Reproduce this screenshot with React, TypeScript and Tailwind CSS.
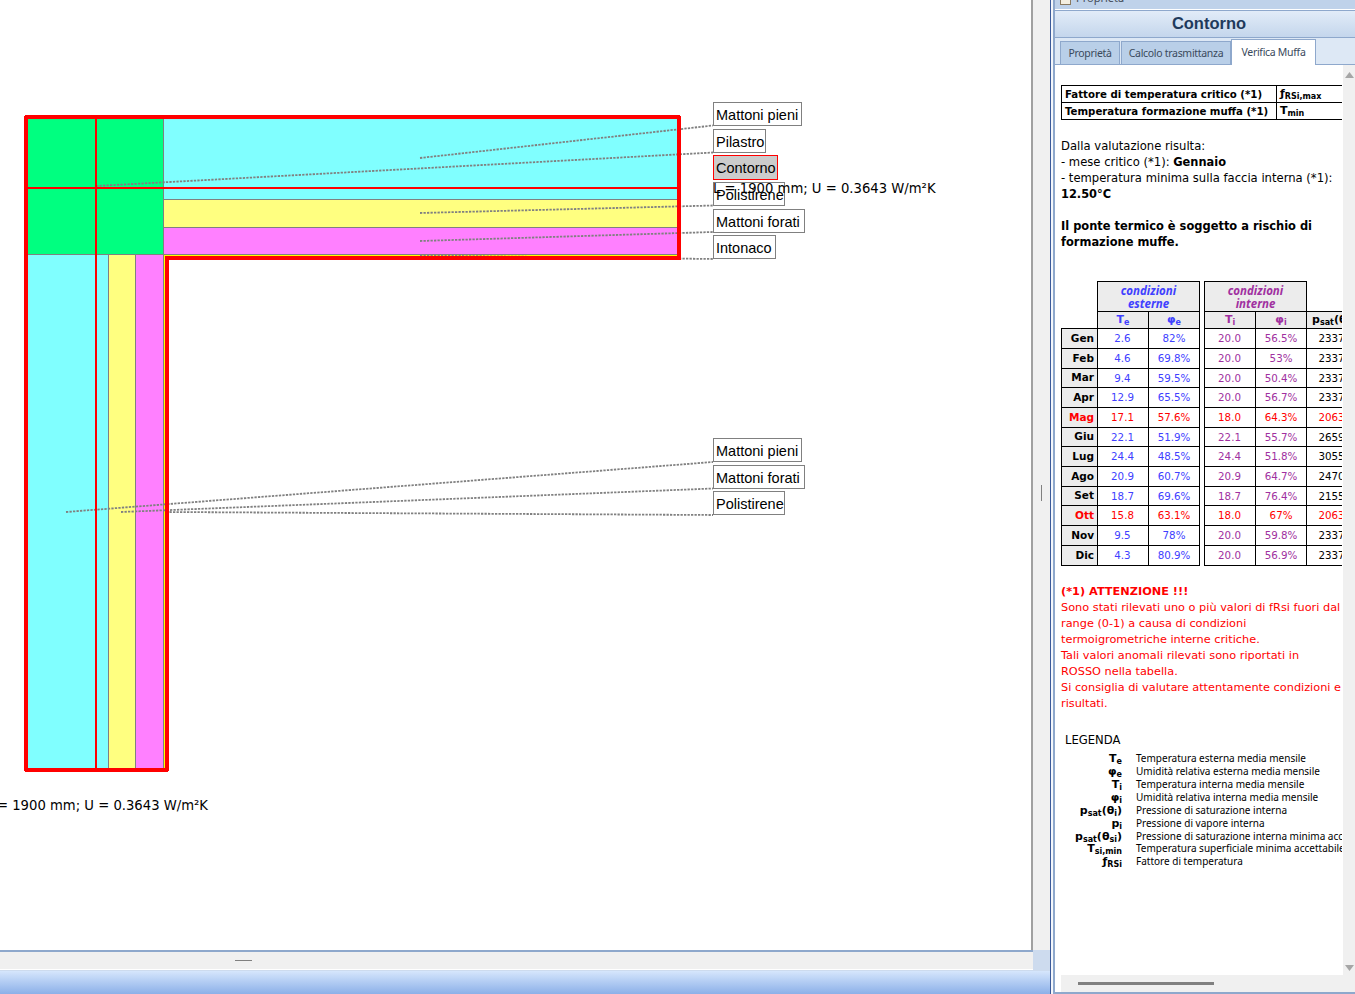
import React from "react";

const body = "font-['Noto_Sans','DejaVu_Sans',sans-serif]";
const verd = "font-['DejaVu_Sans',sans-serif]";

const months = [
  ["Gen", "2.6", "82%", "20.0", "56.5%", "2337", false, "h-[20px]"],
  ["Feb", "4.6", "69.8%", "20.0", "53%", "2337", false, "h-[20px]"],
  ["Mar", "9.4", "59.5%", "20.0", "50.4%", "2337", false, "h-[19px]"],
  ["Apr", "12.9", "65.5%", "20.0", "56.7%", "2337", false, "h-[20px]"],
  ["Mag", "17.1", "57.6%", "18.0", "64.3%", "2063", true, "h-[20px]"],
  ["Giu", "22.1", "51.9%", "22.1", "55.7%", "2659", false, "h-[19px]"],
  ["Lug", "24.4", "48.5%", "24.4", "51.8%", "3055", false, "h-[20px]"],
  ["Ago", "20.9", "60.7%", "20.9", "64.7%", "2470", false, "h-[20px]"],
  ["Set", "18.7", "69.6%", "18.7", "76.4%", "2155", false, "h-[19px]"],
  ["Ott", "15.8", "63.1%", "18.0", "67%", "2063", true, "h-[20px]"],
  ["Nov", "9.5", "78%", "20.0", "59.8%", "2337", false, "h-[20px]"],
  ["Dic", "4.3", "80.9%", "20.0", "56.9%", "2337", false, "h-[20px]"],
] as const;

const Sym = ({ m, s }: { m: string; s: string }) => (
  <span className={`${verd} font-bold text-[11px] leading-none whitespace-nowrap`}>
    {m}
    <span className="text-[8px] leading-none relative top-[2px]">{s}</span>
  </span>
);

const legend: [React.ReactNode, string, string][] = [
  [<Sym m="T" s="e" />, "Temperatura esterna media mensile", "h-[13px]"],
  [<Sym m="φ" s="e" />, "Umidità relativa esterna media mensile", "h-[13px]"],
  [<Sym m="T" s="i" />, "Temperatura interna media mensile", "h-[13px]"],
  [<Sym m="φ" s="i" />, "Umidità relativa interna media mensile", "h-[13px]"],
  [<><Sym m="p" s="sat" /><Sym m="(θ" s="i" /><Sym m=")" s="" /></>, "Pressione di saturazione interna", "h-[13px]"],
  [<Sym m="p" s="i" />, "Pressione di vapore interna", "h-[13px]"],
  [<><Sym m="p" s="sat" /><Sym m="(θ" s="si" /><Sym m=")" s="" /></>, "Pressione di saturazione interna minima accettabile", "h-[12px]"],
  [<Sym m="T" s="si,min" />, "Temperatura superficiale minima accettabile", "h-[13px]"],
  [<Sym m="ƒ" s="RSi" />, "Fattore di temperatura", "h-[13px]"],
];

const Label = ({ text, cls, active }: { text: string; cls: string; active?: boolean }) => (
  <div
    className={`absolute left-[713px] flex items-center pl-[2px] pt-[2px] text-[14.5px] leading-none text-black whitespace-nowrap font-['Liberation_Sans',sans-serif] ${cls} ${
      active ? "bg-[#cccccc] border border-[#ff0000]" : "bg-white border border-[#808080]"
    }`}
  >
    {text}
  </div>
);

const Drawing = () => (
  <svg className="absolute left-0 top-0" width="1031" height="950" shapeRendering="crispEdges">
    <rect x="26" y="117" width="138" height="137.5" fill="#00ff80" />
    <rect x="164" y="117" width="514" height="82" fill="#80ffff" />
    <rect x="164" y="199.5" width="514" height="28" fill="#ffff80" />
    <rect x="164" y="228" width="514" height="26.5" fill="#ff80ff" />
    <rect x="26" y="255" width="82" height="515" fill="#80ffff" />
    <rect x="109" y="255" width="26.5" height="515" fill="#ffff80" />
    <rect x="136" y="255" width="28" height="515" fill="#ff80ff" />
    <rect x="164" y="255" width="514" height="2" fill="#ffff00" />
    <rect x="164" y="255" width="2" height="515" fill="#ffff00" />
    <g fill="#808080">
      <rect x="163" y="117" width="1" height="138" />
      <rect x="164" y="199" width="514" height="1" />
      <rect x="164" y="227" width="514" height="1" />
      <rect x="26" y="254" width="652" height="1" />
      <rect x="108" y="255" width="1" height="515" />
      <rect x="135" y="255" width="1" height="515" />
      <rect x="163" y="255" width="1" height="515" />
    </g>
    <g stroke="#808080" strokeWidth="1.8" strokeDasharray="2.3 1.2" shapeRendering="auto">
      <line x1="420" y1="158" x2="713" y2="125.5" />
      <line x1="96" y1="186" x2="713" y2="152.5" />
      <line x1="420" y1="213" x2="713" y2="205.5" />
      <line x1="420" y1="241" x2="713" y2="232" />
      <line x1="420" y1="255.5" x2="713" y2="259" />
      <line x1="66" y1="512" x2="713" y2="462" />
      <line x1="121" y1="512" x2="713" y2="488.5" />
      <line x1="166" y1="512" x2="713" y2="515" />
    </g>
    <g fill="#ff0000">
      <rect x="25" y="115" width="655" height="4" />
      <rect x="24" y="116" width="4" height="655" />
      <rect x="677" y="116" width="4" height="144" />
      <rect x="165" y="256" width="516" height="4" />
      <rect x="165" y="257" width="4" height="514" />
      <rect x="25" y="768" width="143" height="4" />
      <rect x="95" y="117" width="2" height="652" />
      <rect x="26" y="187" width="652" height="2" />
    </g>
  </svg>
);

export default function App() {
  return (
    <div className={`flex w-[1355px] h-[994px] overflow-hidden bg-white ${body}`}>
      {/* left area */}
      <div className="w-[1050px] h-full flex flex-col shrink-0">
        <div className="flex h-[950px]">
          <div className="relative w-[1033px] h-[950px] overflow-hidden bg-white border-r-2 border-[#a0a0a0]">
            <Drawing />
            <Label text="Mattoni pieni" cls="top-[102px] w-[89px] h-[24px]" />
            <Label text="Pilastro" cls="top-[129px] w-[53px] h-[24px]" />
            <Label text="Contorno" cls="top-[155px] w-[65px] h-[25px]" active />
            <Label text="Polistirene" cls="top-[182px] w-[72px] h-[24px]" />
            <Label text="Mattoni forati" cls="top-[209px] w-[92px] h-[24px]" />
            <Label text="Intonaco" cls="top-[235px] w-[63px] h-[24px]" />
            <Label text="Mattoni pieni" cls="top-[438px] w-[89px] h-[24px]" />
            <Label text="Mattoni forati" cls="top-[465px] w-[92px] h-[24px]" />
            <Label text="Polistirene" cls="top-[491px] w-[72px] h-[24px]" />
            <div className={`absolute left-[713px] top-[180px] text-[13.2px] leading-[18px] text-black whitespace-nowrap ${verd}`}>
              L = 1900 mm; U = 0.3643 W/m²K
            </div>
            <div className={`absolute right-[823px] top-[797px] text-[13.2px] leading-[18px] text-black whitespace-nowrap ${verd}`}>
              L = 1900 mm; U = 0.3643 W/m²K
            </div>
          </div>
          <div className="flex-1 bg-[#f0f0f0] flex items-center justify-center">
            <div className="w-px h-[16px] bg-[#808080] mt-[36px]" />
          </div>
        </div>
        <div className="flex h-[21px] bg-[#cddbee]">
          <div className="w-[1033px] h-[20px] bg-[#f0f0f0] border-t-2 border-t-[#8ea8cc] border-b border-b-white flex items-center pl-[235px]">
            <div className="w-[17px] h-px bg-[#808080]" />
          </div>
        </div>
        <div className="flex-1 bg-gradient-to-b from-[#d6e6fc] to-[#8cb0e8]" />
      </div>

      {/* right panel */}
      <div className="flex-1 h-full flex flex-col border-l border-[#3b5a9a] pl-[2px] bg-[#f4f7fb]">
        <div className="flex-1 min-h-0 flex flex-col border-l-2 border-b-2 border-[#8ea8cc] bg-white">
          <div className="h-[9px] shrink-0 bg-[#bfd2ea] relative overflow-hidden">
            <svg className="absolute left-[5px] top-[-5px]" width="11" height="11" viewBox="0 0 11 11">
              <rect x="0.5" y="0.5" width="10" height="9" fill="#f5efe0" stroke="#8a7a60" />
            </svg>
            <span className="absolute left-[21px] top-[-10px] text-[11px] leading-[16px] text-[#444c58]">Proprietà</span>
          </div>
          <div className="h-[28px] shrink-0 mt-px pl-[8px] pb-[1px] flex items-center justify-center border-y border-[#8ea8cc] bg-gradient-to-b from-[#e2ecf8] to-[#c4d6ec]">
            <span className="font-['Liberation_Sans',sans-serif] font-bold text-[16.5px] leading-none text-[#1f3a5c]">Contorno</span>
          </div>
          <div className="h-[27px] shrink-0 flex items-end pl-[5px] border-b border-[#8ea8cc] bg-[#dde8f5]">
            <div className="w-[60px] h-[23px] mr-px flex items-center justify-center pt-[2px] text-[10.5px] tracking-[-0.3px] text-[#3a4a5c] bg-[#b9cfe8] border border-b-0 border-[#8ea8cc]">
              Proprietà
            </div>
            <div className="w-[110px] h-[23px] flex items-center justify-center pt-[2px] text-[10.5px] tracking-[-0.3px] text-[#3a4a5c] bg-[#b9cfe8] border border-b-0 border-[#8ea8cc]">
              Calcolo trasmittanza
            </div>
            <div className="w-[85px] h-[26px] -mb-px flex items-center justify-center text-[10.5px] tracking-[-0.3px] text-[#3a4a5c] bg-white border border-b-0 border-[#8ea8cc]">
              Verifica Muffa
            </div>
          </div>

          <div className="flex-1 min-h-0 flex">
            <div className={`w-[288px] overflow-hidden pl-[6px] pt-[20px] bg-white border-r border-white ${verd}`}>
              <table className="border-collapse table-fixed w-[320px] text-black">
                <colgroup>
                  <col className="w-[215px]" />
                  <col className="w-[105px]" />
                </colgroup>
                <tbody>
                  <tr className="h-[17px]">
                    <td className="border border-black pl-[3px] pt-[2px] pb-0 text-[10.2px] leading-none font-bold whitespace-nowrap">
                      Fattore di temperatura critico (*1)
                    </td>
                    <td className="border-y border-l border-black pl-[3px] pb-[2px] leading-[10px]"><Sym m="ƒ" s="RSi,max" /></td>
                  </tr>
                  <tr className="h-[17px]">
                    <td className="border border-black pl-[3px] pt-[2px] pb-0 text-[10.2px] leading-none font-bold whitespace-nowrap">
                      Temperatura formazione muffa (*1)
                    </td>
                    <td className="border-y border-l border-black pl-[3px] pb-[2px] leading-[10px]"><Sym m="T" s="min" /></td>
                  </tr>
                </tbody>
              </table>

              <div className="mt-[18px] text-[11.6px] leading-[16px] text-black whitespace-nowrap">
                Dalla valutazione risulta:
                <br />- mese critico (*1): <b className="text-[11.4px]">Gennaio</b>
                <br />- temperatura minima sulla faccia interna (*1):
                <br /><b className="text-[11.4px]">12.50°C</b>
              </div>
              <div className="mt-[16px] text-[11.45px] leading-[16px] font-bold text-black whitespace-nowrap">
                Il ponte termico è soggetto a rischio di
                <br />formazione muffe.
              </div>

              <table className="mt-[31px] border-collapse table-fixed w-[295px] text-[10.3px] leading-none">
                <colgroup>
                  <col className="w-[36px]" />
                  <col className="w-[51px]" />
                  <col className="w-[51px]" />
                  <col className="w-[5px]" />
                  <col className="w-[51px]" />
                  <col className="w-[51px]" />
                  <col className="w-[50px]" />
                </colgroup>
                <tbody>
                  <tr className="h-[30px]">
                    <td />
                    <td colSpan={2} className={`border border-black bg-[#ececec] text-center text-[#4040ff] font-bold italic text-[11.5px] leading-[13px] ${body}`}>
                      condizioni
                      <br />esterne
                    </td>
                    <td />
                    <td colSpan={2} className={`border border-black bg-[#ececec] text-center text-[#a030a0] font-bold italic text-[11.5px] leading-[13px] ${body}`}>
                      condizioni
                      <br />interne
                    </td>
                    <td />
                  </tr>
                  <tr className="h-[17px]">
                    <td className="border-b border-black" />
                    <td className="border border-black bg-[#ececec] text-center text-[#4040ff] pb-[2px] leading-[10px]"><Sym m="T" s="e" /></td>
                    <td className="border border-black bg-[#ececec] text-center text-[#4040ff] pb-[2px] leading-[10px]"><Sym m="φ" s="e" /></td>
                    <td />
                    <td className="border border-black bg-[#ececec] text-center text-[#a030a0] pb-[2px] leading-[10px]"><Sym m="T" s="i" /></td>
                    <td className="border border-black bg-[#ececec] text-center text-[#a030a0] pb-[2px] leading-[10px]"><Sym m="φ" s="i" /></td>
                    <td className="border border-black bg-[#ececec] pl-[5px] pb-[2px] text-black whitespace-nowrap leading-[10px]"><Sym m="p" s="sat" /><Sym m="(θ" s="i" /><Sym m=")" s="" /></td>
                  </tr>
                  {months.map((r) => {
                    const red = r[6];
                    const ext = red ? "text-[#ff0000]" : "text-[#4040ff]";
                    const int = red ? "text-[#ff0000]" : "text-[#a030a0]";
                    return (
                      <tr key={r[0]} className={r[7]}>
                        <td className={`border border-black bg-[#ececec] text-right pr-[3px] pb-[1px] font-bold text-[10.5px] ${red ? "text-[#ff0000]" : "text-black"}`}>{r[0]}</td>
                        <td className={`border border-black pr-[1px] text-center ${ext}`}>{r[1]}</td>
                        <td className={`border border-black text-center ${ext}`}>{r[2]}</td>
                        <td />
                        <td className={`border border-black pr-[1px] text-center ${int}`}>{r[3]}</td>
                        <td className={`border border-black text-center ${int}`}>{r[4]}</td>
                        <td className={`border border-black text-center ${red ? "text-[#ff0000]" : "text-black"}`}>{r[5]}</td>
                      </tr>
                    );
                  })}
                </tbody>
              </table>

              <div className="mt-[18px] text-[11.3px] leading-[16px] text-[#ff0000] whitespace-nowrap">
                <b>(*1) ATTENZIONE !!!</b>
                <br />Sono stati rilevati uno o più valori di fRsi fuori dal
                <br />range (0-1) a causa di condizioni
                <br />termoigrometriche interne critiche.
                <br />Tali valori anomali rilevati sono riportati in
                <br />ROSSO nella tabella.
                <br />Si consiglia di valutare attentamente condizioni e
                <br />risultati.
              </div>

              <div className="mt-[20px] ml-[4px] text-[11.6px] leading-[16px] text-black">LEGENDA</div>
              <div className={`mt-[4px] text-[10px] leading-[13px] text-black ${body}`}>
                {legend.map(([sym, desc, h], i) => (
                  <div key={i} className={`flex items-center whitespace-nowrap ${h}`}>
                    <div className="w-[61px] shrink-0 text-right">{sym}</div>
                    <div className="ml-[14px]">{desc}</div>
                  </div>
                ))}
              </div>
            </div>
            <div className="flex-1 bg-[#f0f0f0] flex flex-col items-end justify-between pr-[1px] pt-[7px] pb-[4px]">
              <svg width="9" height="6" viewBox="0 0 9 6"><path d="M4.5 0 L9 6 L0 6 Z" fill="#a6a6a6" /></svg>
              <svg width="9" height="6" viewBox="0 0 9 6"><path d="M0 0 L9 0 L4.5 6 Z" fill="#a6a6a6" /></svg>
            </div>
          </div>

          <div className="h-[17px] shrink-0 flex bg-white">
            <div className="w-[6px] bg-white" />
            <div className="flex-1 bg-[#f0f0f0] flex items-center pl-[17px]">
              <div className="w-[136px] h-[3px] bg-[#808080]" />
            </div>
          </div>
        </div>
      </div>
    </div>
  );
}
